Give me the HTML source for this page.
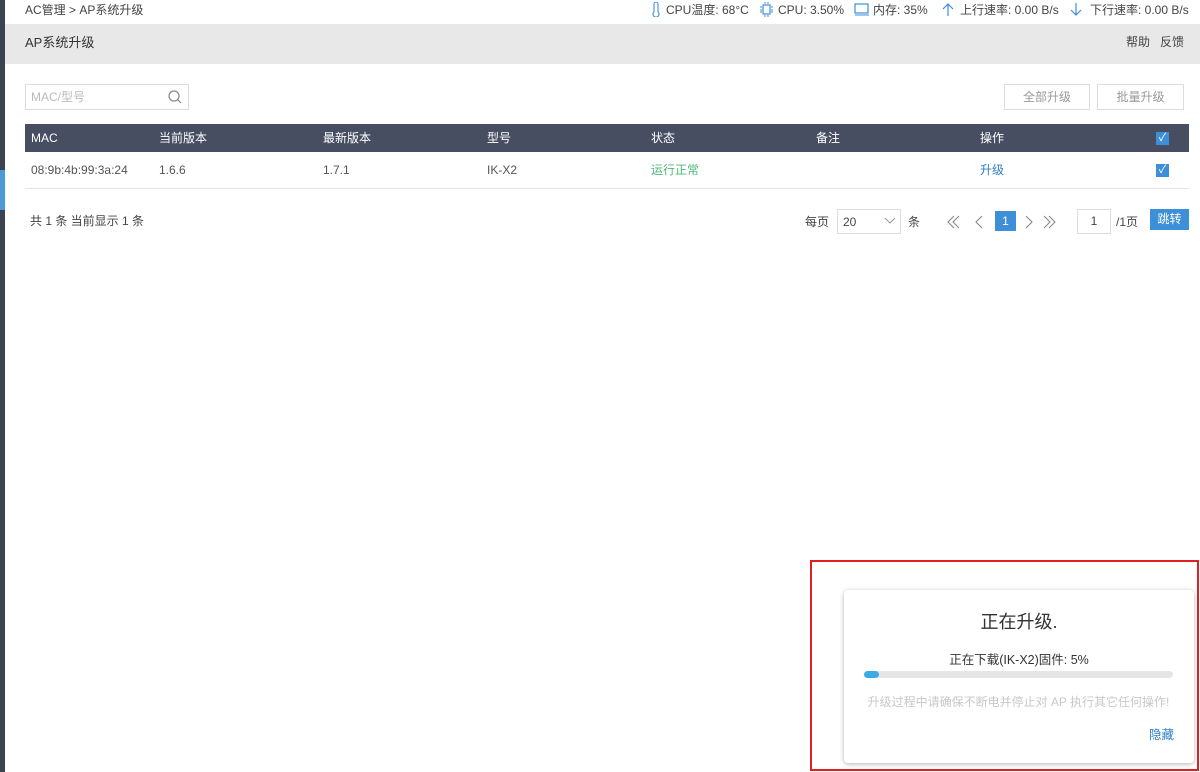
<!DOCTYPE html>
<html><head><meta charset="utf-8"><style>
*{margin:0;padding:0;box-sizing:border-box}
body{width:1200px;height:772px;background:#fff;font-family:"Liberation Sans","Noto Sans CJK SC",sans-serif;font-size:12px;line-height:16px;color:#555;position:relative;overflow:hidden}
.a{position:absolute;white-space:nowrap;line-height:16px}
.t{color:#444;font-size:12px}
</style></head><body>
<div class="a" style="left:0;top:0;width:5px;height:772px;background:#3b4252"></div>
<div class="a" style="left:0;top:170px;width:5px;height:40px;background:#4a9ad8"></div>
<div class="a t" style="left:25px;top:2px">AC管理 &gt; AP系统升级</div>
<svg class="a" style="left:651px;top:2px" width="10" height="15"><path d="M3 2v8a3 3 0 1 0 4 0V2a2 2 0 0 0-4 0z" fill="none" stroke="#3d8fd8" stroke-width="1.1"/></svg>
<div class="a t" style="left:666px;top:2px">CPU温度: 68°C</div>
<svg class="a" style="left:759px;top:2px" width="15" height="15"><rect x="4" y="3" width="7" height="9" fill="none" stroke="#3d8fd8" stroke-width="1.2"/><path d="M1 5h2M1 8h2M1 10h2M12 5h2M12 8h2M12 10h2M6 0v2M9 0v2M6 13v2M9 13v2" stroke="#3d8fd8"/></svg>
<div class="a t" style="left:778px;top:2px">CPU: 3.50%</div>
<svg class="a" style="left:854px;top:2px" width="16" height="15"><rect x="1" y="2" width="13" height="9" fill="none" stroke="#3d8fd8" stroke-width="1.2"/><path d="M1 13h14" stroke="#3d8fd8"/></svg>
<div class="a t" style="left:873px;top:2px">内存: 35%</div>
<svg class="a" style="left:942px;top:2px" width="12" height="15"><path d="M6 14V2M1 7l5-5 5 5" fill="none" stroke="#3d8fd8" stroke-width="1.2"/></svg>
<div class="a t" style="left:960px;top:2px">上行速率: 0.00 B/s</div>
<svg class="a" style="left:1070px;top:2px" width="12" height="15"><path d="M6 1v12M1 8l5 5 5-5" fill="none" stroke="#3d8fd8" stroke-width="1.2"/></svg>
<div class="a t" style="left:1090px;top:2px">下行速率: 0.00 B/s</div>
<div class="a" style="left:5px;top:24px;width:1195px;height:40px;background:#e8e8e8"></div>
<div class="a" style="left:25px;top:35px;font-size:13px;color:#333">AP系统升级</div>
<div class="a t" style="left:1126px;top:34px">帮助&nbsp;&nbsp;&nbsp;反馈</div>
<div class="a" style="left:25px;top:84px;width:164px;height:26px;border:1px solid #ddd"></div>
<div class="a" style="left:31px;top:89px;color:#bbb">MAC/型号</div>
<svg class="a" style="left:168px;top:90px" width="14" height="14"><circle cx="6" cy="6" r="5" fill="none" stroke="#888" stroke-width="1.2"/><line x1="9.5" y1="9.5" x2="13" y2="13" stroke="#888" stroke-width="1.2"/></svg>
<div class="a" style="left:1004px;top:84px;width:86px;height:26px;border:1px solid #ddd;text-align:center;line-height:24px;color:#999">全部升级</div>
<div class="a" style="left:1097px;top:84px;width:87px;height:26px;border:1px solid #ddd;text-align:center;line-height:24px;color:#999">批量升级</div>
<div class="a" style="left:25px;top:124px;width:1164px;height:28px;background:#474e62"></div>
<div class="a" style="left:31px;top:130px;color:#fff">MAC</div>
<div class="a" style="left:159px;top:130px;color:#fff">当前版本</div>
<div class="a" style="left:323px;top:130px;color:#fff">最新版本</div>
<div class="a" style="left:487px;top:130px;color:#fff">型号</div>
<div class="a" style="left:651px;top:130px;color:#fff">状态</div>
<div class="a" style="left:816px;top:130px;color:#fff">备注</div>
<div class="a" style="left:980px;top:130px;color:#fff">操作</div>
<div class="a" style="left:1156px;top:132px;width:13px;height:13px;background:#3d8fd8;color:#fff;font-size:11px;line-height:13px;text-align:center">✓</div>
<div class="a" style="left:31px;top:162px">08:9b:4b:99:3a:24</div>
<div class="a" style="left:159px;top:162px">1.6.6</div>
<div class="a" style="left:323px;top:162px">1.7.1</div>
<div class="a" style="left:487px;top:162px">IK-X2</div>
<div class="a" style="left:651px;top:162px;color:#4cb87a">运行正常</div>
<div class="a" style="left:980px;top:162px;color:#2f80c8">升级</div>
<div class="a" style="left:1156px;top:164px;width:13px;height:13px;background:#3d8fd8;color:#fff;font-size:11px;line-height:13px;text-align:center">✓</div>
<div class="a" style="left:25px;top:188px;width:1164px;height:1px;background:#e4e4e4"></div>
<div class="a t" style="left:30px;top:213px">共 1 条 当前显示 1 条</div>
<div class="a t" style="left:805px;top:214px">每页</div>
<div class="a" style="left:837px;top:209px;width:64px;height:25px;border:1px solid #ddd"></div>
<div class="a t" style="left:843px;top:214px">20</div>
<svg class="a" style="left:884px;top:217px" width="12" height="8"><path d="M1 1l5 5 5-5" fill="none" stroke="#999"/></svg>
<div class="a t" style="left:908px;top:214px">条</div>
<svg class="a" style="left:944px;top:214px" width="40" height="16"><path d="M10 2L4 8l6 6M15 2L9 8l6 6M38 2L32 8l6 6" fill="none" stroke="#888" stroke-width="1.1"/></svg>
<div class="a" style="left:995px;top:211px;width:21px;height:20px;background:#3d8fd8;color:#fff;text-align:center;line-height:20px">1</div>
<svg class="a" style="left:1022px;top:214px" width="40" height="16"><path d="M4 2l6 6-6 6M22 2l6 6-6 6M27 2l6 6-6 6" fill="none" stroke="#888" stroke-width="1.1"/></svg>
<div class="a" style="left:1077px;top:209px;width:34px;height:25px;border:1px solid #ddd;text-align:center;line-height:23px;color:#444">1</div>
<div class="a t" style="left:1116px;top:214px">/1页</div>
<div class="a" style="left:1150px;top:209px;width:39px;height:21px;background:#3d8fd8;color:#fff;text-align:center;line-height:21px">跳转</div>
<div class="a" style="left:810px;top:560px;width:389px;height:211px;border:2px solid #e02020"></div>
<div class="a" style="left:844px;top:590px;width:350px;height:173px;background:#fff;border-radius:4px;box-shadow:0 1px 5px rgba(0,0,0,.3)"></div>
<div class="a" style="left:844px;top:611px;width:350px;text-align:center;font-size:18px;line-height:22px;color:#333">正在升级.</div>
<div class="a" style="left:844px;top:652px;width:350px;text-align:center;font-size:12.5px;color:#333">正在下载(IK-X2)固件: 5%</div>
<div class="a" style="left:864px;top:671px;width:309px;height:7px;background:#e6e6e6;border-radius:4px"></div>
<div class="a" style="left:864px;top:671px;width:15px;height:7px;background:#3aabe5;border-radius:4px"></div>
<div class="a" style="left:864px;top:694px;width:309px;text-align:center;font-size:12px;color:#c8c8c8">升级过程中请确保不断电并停止对 AP 执行其它任何操作!</div>
<div class="a" style="left:1149px;top:727px;color:#2f80c8;font-size:12.5px">隐藏</div>
</body></html>
